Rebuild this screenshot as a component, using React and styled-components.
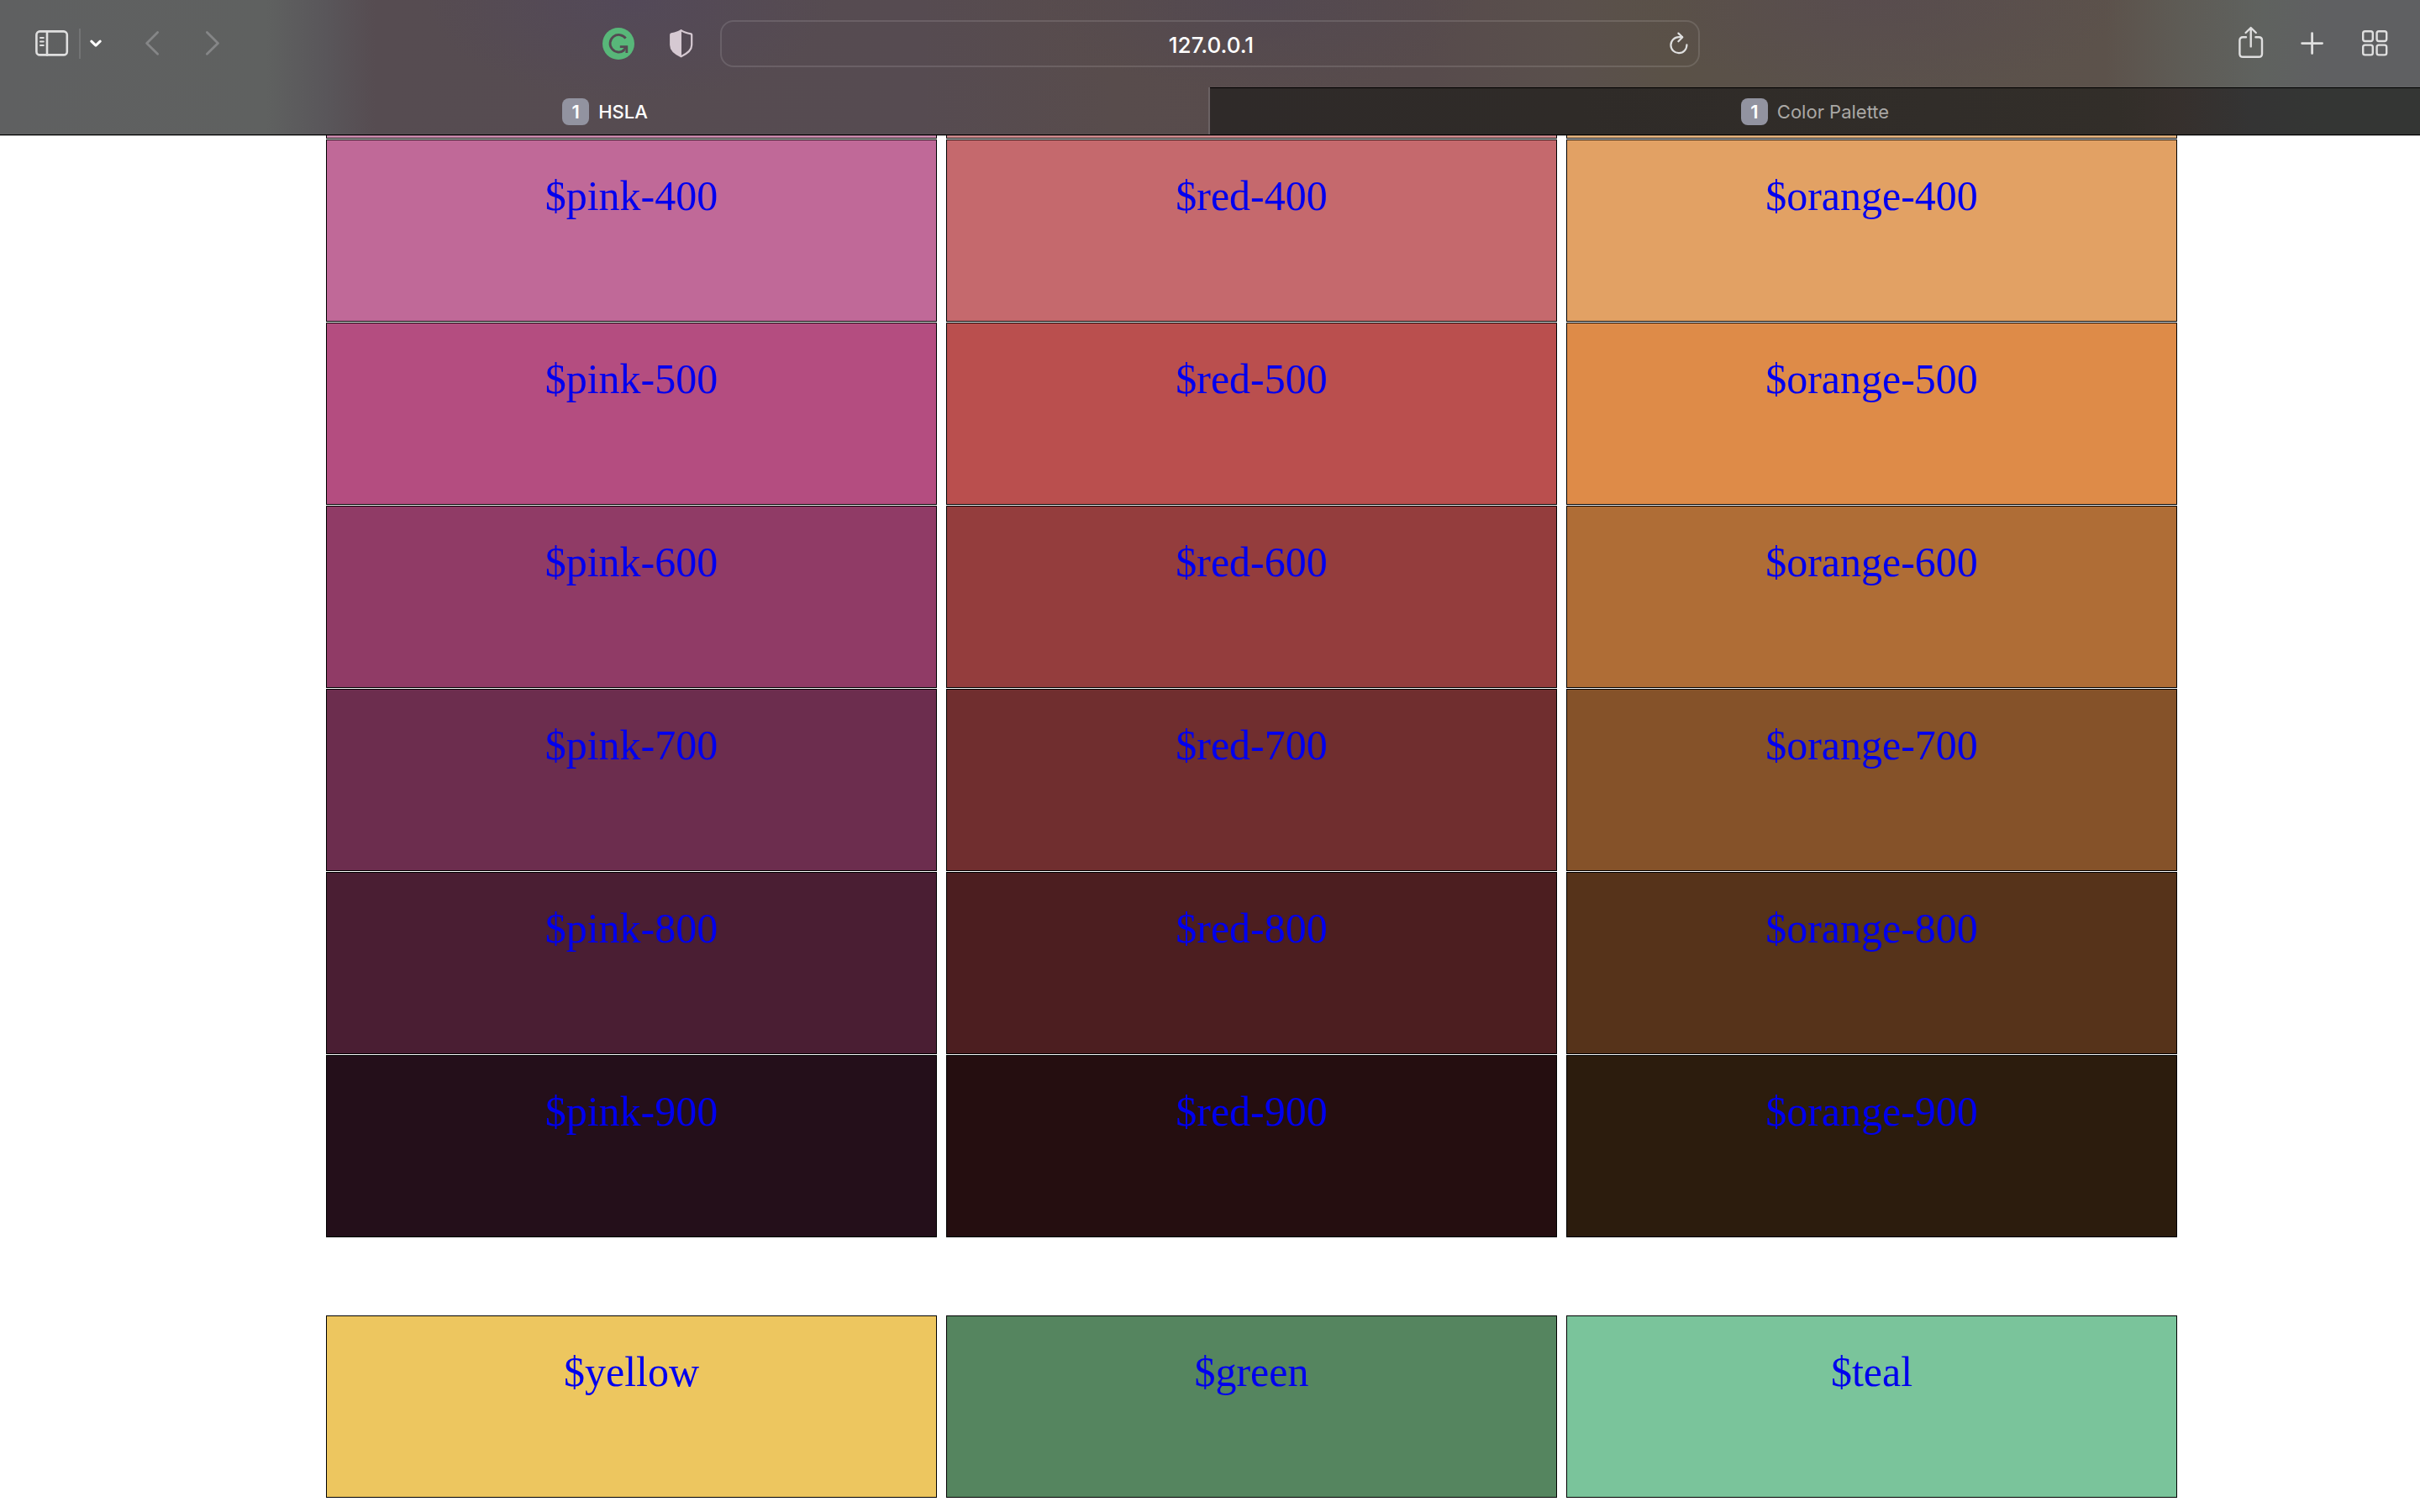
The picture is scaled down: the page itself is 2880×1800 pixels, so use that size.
import React from "react";
import styled, { createGlobalStyle } from "styled-components";

const GlobalStyle = createGlobalStyle`
  *, *::before, *::after { box-sizing: border-box; }
  body { margin: 0; background: #ffffff; }
`;

const uiFont = `Inter, "Liberation Sans", sans-serif`;

/* Browser chrome */

const Chrome = styled.header`
  position: relative;
  border-bottom: 1px solid #000000;
  box-shadow: 0 1px 0 rgba(0, 0, 0, 0.3);
  font-family: ${uiFont};
  background:
    radial-gradient(ellipse 240px 120px at 26% 0, rgba(82, 72, 90, 0.8), rgba(82, 72, 90, 0)),
    radial-gradient(ellipse 260px 110px at 52% 0, rgba(82, 72, 82, 0.8), rgba(82, 72, 82, 0)),
    radial-gradient(ellipse 300px 110px at 77.5% 0, rgba(88, 76, 78, 0.9), rgba(88, 76, 78, 0)),
    linear-gradient(
      90deg,
      #5f6061 0,
      #5f6160 11%,
      #59565a 13.5%,
      #564c51 15.5%,
      #564b51 38%,
      #584c4c 46%,
      #574b4c 59%,
      #5a504c 65%,
      #5a5147 69%,
      #5a514b 76%,
      #5c524b 87%,
      #5e5b55 90%,
      #5f625f 93.5%,
      #5f6062 96%
    );
`;

const Toolbar = styled.div`
  display: grid;
  grid-template-columns: 857fr 1166fr 857fr;
  align-items: center;
  height: 104px;
`;

const ToolGroup = styled.div`
  display: flex;
  align-items: center;
  justify-content: ${(p) => (p.$end ? "flex-end" : "flex-start")};
  gap: ${(p) => p.$gap || 0}px;
  padding: ${(p) => p.$pad || "0"};
  margin-left: ${(p) => p.$push || "0"};
`;

const IconButton = styled.button`
  display: flex;
  padding: 0;
  border: 0;
  background: none;
  color: ${(p) => p.$color || "#dfdfdf"};
  svg { display: block; }
`;

const Divider = styled.span`
  width: 2px;
  height: 36px;
  margin: 0 11px 0 12px;
  background: #737475;
`;

const AddressBar = styled.form`
  display: flex;
  align-items: center;
  height: 56px;
  margin: 0;
  padding: 0 11px 0 38px;
  border: 2px solid rgba(255, 255, 255, 0.12);
  border-radius: 16px;
`;

const AddressInput = styled.input`
  flex: 1;
  min-width: 0;
  padding: 3px 0 0;
  border: 0;
  outline: 0;
  background: none;
  color: #ffffff;
  text-align: center;
  font: 500 26px/32px ${uiFont};
`;

const TabBar = styled.nav`
  display: grid;
  grid-template-columns: 1fr 1fr;
  height: 56px;
`;

const Tab = styled.button`
  display: flex;
  align-items: center;
  justify-content: center;
  gap: 11px;
  padding: 2px 0 0;
  border: 0;
  color: ${(p) => (p.$active ? "#ffffff" : "#aaa8a5")};
  background: ${(p) =>
    p.$active
      ? "none"
      : "linear-gradient(90deg, #2f2a29 0, #2f2b28 30%, #312d29 60%, #322e29 75%, #36302d 80%, #343434 86%, #343634 92%)"};
  box-shadow: ${(p) =>
    p.$active ? "inset -2px 0 0 #6b6264" : "inset 0 1px 0 #000000"};
  font: ${(p) => (p.$active ? 500 : 400)} 22px/28px ${uiFont};
`;

const TabBadge = styled.span`
  width: 32px;
  height: 32px;
  border-radius: 8px;
  background: #9293a0;
  color: #ffffff;
  text-align: center;
  font: 600 22px/32px ${uiFont};
`;

/* Palette page */

const Page = styled.main`
  padding: 0 289px 17px 388px;
`;

const Palette = styled.section`
  display: grid;
  grid-template-columns: repeat(3, 1fr);
  gap: 1px 11px;
  margin-bottom: ${(p) => (p.$last ? 0 : 93)}px;
`;

const Edge = styled.div`
  height: 4px;
  border: 1px solid #000000;
  border-top: 0;
  background: ${(p) => p.$color};
`;

const Swatch = styled.div`
  padding: 37px 24px 120px;
  border: 1px solid #000000;
  background: ${(p) => p.$color};
  text-align: center;
  font: 50px/58px "Liberation Serif", "Times New Roman", serif;
`;

const SwatchLink = styled.a`
  color: #0000ee;
  text-decoration: none;
`;

const edges = ["#cf8fb2", "#d38f92", "#e8b783"];

const shades = [
  ["$pink-400", "#c06998"], ["$red-400", "#c5696d"], ["$orange-400", "#e2a164"],
  ["$pink-500", "#b44d80"], ["$red-500", "#ba4f4e"], ["$orange-500", "#de8b48"],
  ["$pink-600", "#903b66"], ["$red-600", "#943d3d"], ["$orange-600", "#af6d36"],
  ["$pink-700", "#6c2d4e"], ["$red-700", "#702e2f"], ["$orange-700", "#855229"],
  ["$pink-800", "#4a1e33"], ["$red-800", "#4c1e20"], ["$orange-800", "#56331a"],
  ["$pink-900", "#240f1a"], ["$red-900", "#250e10"], ["$orange-900", "#2c1c0d"],
];

const bases = [
  ["$yellow", "#edc65f"], ["$green", "#55855f"], ["$teal", "#7ac49b"],
];

function Swatches({ items }) {
  return items.map(([name, color]) => (
    <Swatch key={name} $color={color}>
      <SwatchLink href={"#" + name.slice(1)}>{name}</SwatchLink>
    </Swatch>
  ));
}

const line = {
  fill: "none",
  stroke: "currentColor",
  strokeLinecap: "round",
  strokeLinejoin: "round",
};

const SidebarIcon = () => (
  <svg width="40" height="32" viewBox="0 0 40 32" {...line} strokeWidth="2.6">
    <rect x="1.4" y="1.4" width="36.4" height="28" rx="4" />
    <path d="M14 1.5v28" />
    <path d="M6 9h3.8M6 13.5h3.8M6 18h3.8" strokeWidth="2" />
  </svg>
);

const ChevronDown = () => (
  <svg width="14" height="10" viewBox="0 0 14 10" {...line} strokeWidth="3">
    <path d="M1.8 2.2 7 7.2l5.2-5" />
  </svg>
);

const Back = () => (
  <svg width="20" height="32" viewBox="0 0 20 32" {...line} strokeWidth="2.8">
    <path d="M16.6 2.6 3.6 15.4l13 12.8" />
  </svg>
);

const Forward = () => (
  <svg width="20" height="32" viewBox="0 0 20 32" {...line} strokeWidth="2.8">
    <path d="M3.4 2.6l13 12.8-13 12.8" />
  </svg>
);

const Grammarly = () => (
  <svg width="40" height="38" viewBox="0 0 40 38" fill="none">
    <circle cx="19" cy="19" r="19" fill="#58b779" />
    <path d="M27.6 12.6A10.3 10.3 0 1 0 26 26.6" stroke="#544a52" strokeWidth="2.8" />
    <path d="M20.8 22.6h8v7.4" stroke="#544a52" strokeWidth="2.8" />
    <path d="M28.5 22.8l-4.6 5" stroke="#544a52" strokeWidth="2.6" />
  </svg>
);

const Shield = () => (
  <svg width="28" height="34" viewBox="0 0 28 34">
    <path
      d="M13.6 1.2 C16.8 3.4 21.6 4.6 25.4 5.4 Q26.2 5.6 26.2 6.6 V18.6 C26.2 25.4 19 29.8 13.6 32.2 C8.2 29.8 1.2 25.4 1.2 18.6 V6.6 Q1.2 5.6 2 5.4 C5.8 4.6 10.4 3.4 13.6 1.2Z"
      fill="none"
      stroke="currentColor"
      strokeWidth="2.2"
    />
    <path
      d="M14 1 C10.4 3.4 5.8 4.6 2 5.4 Q1.2 5.6 1.2 6.6 V18.6 C1.2 25.4 8.2 29.8 14 32.4Z"
      fill="currentColor"
    />
  </svg>
);

const Reload = () => (
  <svg width="24" height="28" viewBox="0 0 24 28" {...line} strokeWidth="2.2">
    <path d="M21.4 15.4A9.5 9.5 0 1 1 11.9 6.2H16" />
    <path d="M11.4 1.6l4.9 4.7-4.9 5" />
  </svg>
);

const Share = () => (
  <svg width="30" height="42" viewBox="0 0 30 42" {...line} strokeWidth="2.4">
    <path d="M9 13.3H5.2Q1.4 13.3 1.4 17.1V33Q1.4 36.8 5.2 36.8H24.2Q28 36.8 28 33V17.1Q28 13.3 24.2 13.3H20.4" />
    <path d="M14.7 24.4V2.2M8.6 8l6.1-6 6.1 6" />
  </svg>
);

const Plus = () => (
  <svg width="28" height="28" viewBox="0 0 28 28" {...line} strokeWidth="2.8">
    <path d="M13.6 1.6v24M1.6 13.6h24" />
  </svg>
);

const Overview = () => (
  <svg width="32" height="32" viewBox="0 0 32 32" {...line} strokeWidth="2.4">
    <rect x="2.2" y="1.2" width="11.6" height="11.8" rx="2.4" />
    <rect x="18.6" y="1.2" width="11.6" height="11.8" rx="2.4" />
    <rect x="2.2" y="17.6" width="11.6" height="11.8" rx="2.4" />
    <rect x="18.6" y="17.6" width="11.6" height="11.8" rx="2.4" />
  </svg>
);

export default function App() {
  return (
    <>
      <GlobalStyle />
      <Chrome>
        <Toolbar>
          <ToolGroup $pad="0 32px 0 42px">
            <IconButton aria-label="Show sidebar"><SidebarIcon /></IconButton>
            <Divider />
            <IconButton aria-label="Tab groups" $color="#ffffff"><ChevronDown /></IconButton>
            <ToolGroup $gap={52} $push="50px">
              <IconButton aria-label="Back" $color="#858687"><Back /></IconButton>
              <IconButton aria-label="Forward" $color="#858687"><Forward /></IconButton>
            </ToolGroup>
            <ToolGroup $gap={40} $push="auto">
              <IconButton aria-label="Grammarly"><Grammarly /></IconButton>
              <IconButton aria-label="Privacy report" $color="#d6c9d2"><Shield /></IconButton>
            </ToolGroup>
          </ToolGroup>
          <AddressBar>
            <AddressInput type="text" aria-label="Address" defaultValue="127.0.0.1" />
            <IconButton type="button" aria-label="Reload"><Reload /></IconButton>
          </AddressBar>
          <ToolGroup $end $gap={44} $pad="0 38px 0 0">
            <IconButton aria-label="Share"><Share /></IconButton>
            <IconButton aria-label="New tab"><Plus /></IconButton>
            <IconButton aria-label="Tab overview"><Overview /></IconButton>
          </ToolGroup>
        </Toolbar>
        <TabBar>
          <Tab $active>
            <TabBadge>1</TabBadge>
            HSLA
          </Tab>
          <Tab>
            <TabBadge>1</TabBadge>
            Color Palette
          </Tab>
        </TabBar>
      </Chrome>
      <Page>
        <Palette>
          {edges.map((color) => (
            <Edge key={color} $color={color} />
          ))}
          <Swatches items={shades} />
        </Palette>
        <Palette $last>
          <Swatches items={bases} />
        </Palette>
      </Page>
    </>
  );
}
